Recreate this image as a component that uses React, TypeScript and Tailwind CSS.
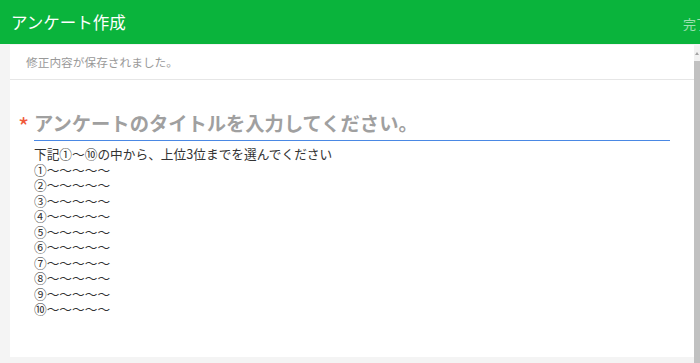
const items = ["①", "②", "③", "④", "⑤", "⑥", "⑦", "⑧", "⑨", "⑩"];

const App = () => {
  return (
    <div className="h-[363px] w-[700px] overflow-hidden bg-[#f4f4f4] font-['Noto_Sans_CJK_JP','Noto_Sans',sans-serif]">
      {/* Header */}
      <header className="flex h-[44px] items-center bg-[#0ab43c]">
        <h1 className="flex-1 pl-[11px] text-[16.5px] leading-none text-white">アンケート作成</h1>
        <div className="w-[17px] overflow-hidden">
          <span className="whitespace-nowrap text-[13px] leading-none text-white/60">完了</span>
        </div>
      </header>

      <div className="flex">
        {/* Panel */}
        <main className="ml-[10px] mt-px h-[312px] w-[684px] bg-white">
          <div className="flex h-[35px] items-center border-b border-[#e6e6e6] pl-[16px] text-[11.7px] text-[#999]">
            修正内容が保存されました。
          </div>

          <div className="mt-[27px] flex pl-[8px] pr-[24px]">
            <span className="flex h-[34px] w-[16px] items-center pt-[4px] text-[24px] leading-none text-[#f0593a]">*</span>
            <div className="flex h-[34px] flex-1 items-center border-b border-[#4a88e4]">
              <span className="text-[19.3px] font-bold leading-none text-[#a0a0a0]">
                アンケートのタイトルを入力してください。
              </span>
            </div>
          </div>

          <div className="mt-[5px] pl-[24px] text-[12.7px] leading-[15.5px] text-[#333]">
            <p>下記①～⑩の中から、上位3位までを選んでください</p>
            {items.map((n) => (
              <p key={n}>{n}～～～～～</p>
            ))}
          </div>
        </main>

        {/* Scrollbar */}
        <div className="mt-[2px] flex h-[317px] w-[6px] flex-col">
          <div className="flex h-[15px] items-center justify-center bg-[#f1f1f1]">
            <span className="h-0 w-0 border-x-[2px] border-b-[3px] border-x-transparent border-b-[#a3a3a3]" />
          </div>
          <div className="flex-1 bg-[#c1c1c1]" />
        </div>
      </div>
    </div>
  );
};

export default App;
